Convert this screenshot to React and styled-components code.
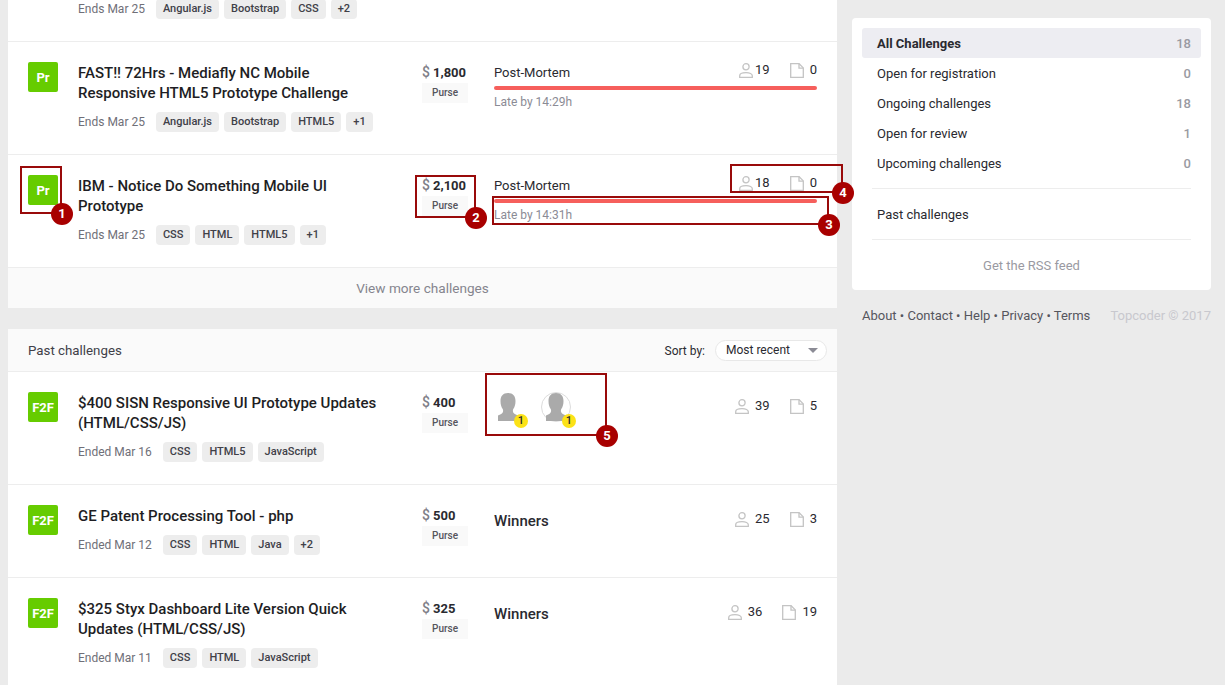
import React from 'react'
import styled, { createGlobalStyle } from 'styled-components'

const Global = createGlobalStyle`
  html, body {
    margin: 0;
    padding: 0;
    height: 685px;
    overflow: hidden;
    background: #ebebeb;
  }
  body {
    font-family: Roboto, "Liberation Sans", sans-serif;
    color: #2a2a30;
  }
`
const Page = styled.div`
  position: relative;
  display: flex;
  align-items: flex-start;
  gap: 15px;
  padding-left: 8px;
  height: 685px;
  overflow: hidden;
`
const Main = styled.div`
  width: 829px;
  flex: none;
`
const Section = styled.section`
  background: #fff;
  margin-bottom: 21px;
`
const CutRow = styled.div`
  display: flow-root;
  height: 42px;
  box-sizing: border-box;
  padding-left: 70px;
  border-bottom: 1px solid #ededed;
`
const Row = styled.div`
  display: flex;
  box-sizing: border-box;
  height: ${({ $height }) => $height || 113}px;
  padding: 20px 20px 0;
  border-bottom: 1px solid #ededed;
`
const Track = styled.div`
  width: 30px;
  height: 30px;
  flex: none;
  margin-right: 20px;
  border-radius: 2px;
  background: #66cc00;
  color: #fff;
  font-size: 13px;
  font-weight: 700;
  display: flex;
  align-items: center;
  justify-content: center;
`
const Info = styled.div`
  width: 344px;
  flex: none;
`
const Title = styled.h2`
  margin: 1px 0 9px;
  width: 305px;
  font-size: 15px;
  line-height: 20px;
  font-weight: 500;
  color: #1e1e24;
`
const Meta = styled.div`
  display: flex;
  align-items: center;
  gap: 5px;
  margin-top: ${({ $cut }) => ($cut ? -1 : 0)}px;
`
const When = styled.span`
  font-size: 12px;
  color: #6f6f78;
  margin-right: 6px;
`
const Tag = styled.span`
  height: 20px;
  line-height: 20px;
  padding: 0 7px;
  border-radius: 4px;
  background: #ededed;
  font-size: 11px;
  font-weight: 500;
  color: #404048;
`
const Prize = styled.div`
  width: 72px;
  flex: none;
`
const Amount = styled.div`
  font-size: 13px;
  line-height: 20px;
  font-weight: 700;
  color: #2a2a30;
  span {
    color: #7f7f88;
    font-weight: 500;
    font-size: 14px;
    margin-right: 3px;
  }
`
const Purse = styled.div`
  width: 46px;
  height: 20px;
  line-height: 20px;
  text-align: center;
  background: #f9f9f9;
  font-size: 10px;
  font-weight: 500;
  color: #55555d;
`
const Status = styled.div`
  flex: 1;
  padding-top: 1px;
`
const StatusHead = styled.div`
  display: flex;
  align-items: flex-start;
  justify-content: space-between;
  height: 23px;
`
const Phase = styled.span`
  font-size: 13px;
  line-height: 20px;
  color: #2a2a30;
  font-weight: ${({ $strong }) => ($strong ? 500 : 400)};
  ${({ $strong }) => $strong && 'font-size: 15px; margin-top: 5px;'}
`
const Bar = styled.div`
  height: 4px;
  border-radius: 2px;
  background: #f65f5c;
`
const Late = styled.div`
  margin-top: 4px;
  font-size: 12px;
  line-height: 16px;
  color: #8b8b95;
`
const Counts = styled.div`
  display: flex;
  align-items: center;
  gap: 20px;
  margin-top: ${({ $low }) => ($low ? 4 : -2)}px;
  font-size: 13px;
  line-height: 18px;
  color: #2a2a30;
`
const Count = styled.span`
  display: flex;
  align-items: center;
  gap: ${({ $gap }) => $gap}px;
`
const Winners = styled.div`
  display: flex;
  gap: 18px;
  margin: -1px 0 0 -1px;
`
const Avatar = styled.div`
  position: relative;
  width: 30px;
  height: 30px;
  box-sizing: border-box;
  border-radius: 50%;
  display: flex;
  justify-content: center;
  border: 1px solid ${({ $ring }) => ($ring ? '#dcdcdc' : 'transparent')};
`
const Place = styled.span`
  position: absolute;
  left: 20px;
  top: 21px;
  width: 14px;
  height: 14px;
  border-radius: 50%;
  background: #fce217;
  font-size: 11px;
  font-weight: 500;
  line-height: 14px;
  text-align: center;
  color: #2a2a30;
`
const More = styled.div`
  height: 40px;
  line-height: 41px;
  text-align: center;
  background: #fafafa;
  font-size: 13.6px;
  color: #85858e;
`
const PastHead = styled.div`
  display: flex;
  align-items: center;
  justify-content: space-between;
  box-sizing: border-box;
  height: 43px;
  padding: 1px 10px 0 20px;
  background: #fafafa;
  border-bottom: 1px solid #ededed;
  font-size: 13.3px;
  color: #404048;
`
const Sort = styled.div`
  display: flex;
  align-items: center;
  gap: 10px;
  font-size: 12px;
  color: #2a2a30;
`
const Select = styled.div`
  position: relative;
  width: 112px;
  height: 21px;
  box-sizing: border-box;
  padding-left: 10px;
  line-height: 19px;
  background: #fff;
  border: 1px solid #e8e8e8;
  border-radius: 11px;
  &::after {
    content: '';
    position: absolute;
    right: 8px;
    top: 7px;
    border-left: 5px solid transparent;
    border-right: 5px solid transparent;
    border-top: 5px solid #8b8b95;
  }
`
const Side = styled.aside`
  width: 359px;
  flex: none;
  margin-top: 18px;
`
const Panel = styled.nav`
  box-sizing: border-box;
  background: #fff;
  border-radius: 4px;
  padding: 10px;
`
const Item = styled.div`
  display: flex;
  justify-content: space-between;
  height: 30px;
  line-height: 31px;
  padding: 0 10px 0 15px;
  border-radius: 3px;
  font-size: 13px;
  color: #2a2a30;
  ${({ $active }) => $active && 'background: #ededf2; font-weight: 700;'}
`
const Num = styled.span`
  color: #9a9aa2;
  font-weight: 500;
`
const Divider = styled.div`
  height: 1px;
  margin: 10px 10px;
  background: #ededed;
`
const Rss = styled.div`
  height: 30px;
  line-height: 31px;
  text-align: center;
  font-size: 13px;
  color: #9a9aa2;
`
const Foot = styled.footer`
  display: flex;
  justify-content: space-between;
  padding: 17px 0 0 10px;
  font-size: 13px;
  line-height: 18px;
  color: #55555d;
`
const Copy = styled.span`
  color: #c8c8ce;
`
const Mark = styled.div`
  position: absolute;
  left: ${({ $x }) => $x}px;
  top: ${({ $y }) => $y}px;
  width: ${({ $w }) => $w}px;
  height: ${({ $h }) => $h}px;
  box-sizing: border-box;
  border: 2px solid #990a0a;
`
const MarkNum = styled.span`
  position: absolute;
  right: -13px;
  bottom: -13px;
  width: 22px;
  height: 22px;
  border-radius: 50%;
  background: #a80000;
  color: #fff;
  font-size: 13px;
  font-weight: 700;
  line-height: 22px;
  text-align: center;
`

const PersonIcon = () => (
  <svg width="14" height="15" viewBox="0 0 14 15" fill="none" stroke="#c4c4c4" strokeWidth="1.3">
    <circle cx="7" cy="3.8" r="3.1" />
    <path d="M.7 14.300v-1.600c0-1.900 2.600-3 6.300-3s6.300 1.100 6.300 3v1.600z" />
  </svg>
)
const DocIcon = () => (
  <svg width="14" height="15" viewBox="0 0 14 15" fill="none" stroke="#c4c4c4" strokeWidth="1.3">
    <path d="M.7.7h8.400l4.200 4.200v9.400H.7z" />
    <path d="M9 .7v4.400h4.300" />
  </svg>
)
const Head = () => (
  <svg width="20" height="28" viewBox="0 0 20 28">
    <path
      fill="#aaa"
      d="M10 0c5 0 7.500 3 7.500 8 0 3.500-.8 6-2.200 8-.7 1.100-.5 3.300.6 4.300 1 .9 2.700 1.500 4.100 2.200V28H0v-5.500c1.400-.7 3.100-1.300 4.100-2.200 1.100-1 1.300-3.200.6-4.300C3.300 14 2.500 11.500 2.500 8c0-5 2.500-8 7.500-8z"
    />
  </svg>
)

const Tags = ({ when, tags, cut }) => (
  <Meta $cut={cut}>
    <When>{when}</When>
    {tags.map((t) => (
      <Tag key={t}>{t}</Tag>
    ))}
  </Meta>
)
const Stats = ({ reg, sub, gap = 6, low }) => (
  <Counts $low={low}>
    <Count $gap={gap}>
      <PersonIcon />
      {reg}
    </Count>
    <Count $gap={6}>
      <DocIcon />
      {sub}
    </Count>
  </Counts>
)
const Money = ({ value }) => (
  <Prize>
    <Amount>
      <span>$</span>
      {value}
    </Amount>
    <Purse>Purse</Purse>
  </Prize>
)

const ongoing = [
  {
    title: 'FAST!! 72Hrs - Mediafly NC Mobile Responsive HTML5 Prototype Challenge',
    tags: ['Angular.js', 'Bootstrap', 'HTML5', '+1'],
    prize: '1,800',
    late: '14:29h',
    reg: 19,
  },
  {
    title: 'IBM - Notice Do Something Mobile UI Prototype',
    tags: ['CSS', 'HTML', 'HTML5', '+1'],
    prize: '2,100',
    late: '14:31h',
    reg: 18,
  },
]
const past = [
  {
    title: '$400 SISN Responsive UI Prototype Updates (HTML/CSS/JS)',
    when: 'Ended Mar 16',
    tags: ['CSS', 'HTML5', 'JavaScript'],
    prize: '400',
    reg: 39,
    sub: 5,
    avatars: true,
    height: 113,
  },
  {
    title: 'GE Patent Processing Tool - php',
    when: 'Ended Mar 12',
    tags: ['CSS', 'HTML', 'Java', '+2'],
    prize: '500',
    reg: 25,
    sub: 3,
    height: 93,
  },
  {
    title: '$325 Styx Dashboard Lite Version Quick Updates (HTML/CSS/JS)',
    when: 'Ended Mar 11',
    tags: ['CSS', 'HTML', 'JavaScript'],
    prize: '325',
    reg: 36,
    sub: 19,
    height: 113,
  },
]
const filters = [
  ['All Challenges', 18],
  ['Open for registration', 0],
  ['Ongoing challenges', 18],
  ['Open for review', 1],
  ['Upcoming challenges', 0],
]
const marks = [
  [20, 166, 42, 48, 1],
  [415, 175, 61, 43, 2],
  [492, 196, 337, 29, 3],
  [730, 164, 113, 29, 4],
  [485, 373, 122, 63, 5],
]

export default function App() {
  return (
    <Page>
      <Global />
      <Main>
        <Section>
          <CutRow>
            <Tags when="Ends Mar 25" tags={['Angular.js', 'Bootstrap', 'CSS', '+2']} cut />
          </CutRow>
          {ongoing.map((c) => (
            <Row key={c.title}>
              <Track>Pr</Track>
              <Info>
                <Title>{c.title}</Title>
                <Tags when="Ends Mar 25" tags={c.tags} />
              </Info>
              <Money value={c.prize} />
              <Status>
                <StatusHead>
                  <Phase>Post-Mortem</Phase>
                  <Stats reg={c.reg} sub={0} gap={2} />
                </StatusHead>
                <Bar />
                <Late>Late by {c.late}</Late>
              </Status>
            </Row>
          ))}
          <More>View more challenges</More>
        </Section>
        <Section>
          <PastHead>
            Past challenges
            <Sort>
              Sort by:
              <Select>Most recent</Select>
            </Sort>
          </PastHead>
          {past.map((c) => (
            <Row key={c.title} $height={c.height}>
              <Track>F2F</Track>
              <Info>
                <Title>{c.title}</Title>
                <Tags when={c.when} tags={c.tags} />
              </Info>
              <Money value={c.prize} />
              <Status>
                <StatusHead>
                  {c.avatars ? (
                    <Winners>
                      <Avatar>
                        <Head />
                        <Place>1</Place>
                      </Avatar>
                      <Avatar $ring>
                        <Head />
                        <Place>1</Place>
                      </Avatar>
                    </Winners>
                  ) : (
                    <Phase $strong>Winners</Phase>
                  )}
                  <Stats reg={c.reg} sub={c.sub} low />
                </StatusHead>
              </Status>
            </Row>
          ))}
        </Section>
      </Main>
      <Side>
        <Panel>
          {filters.map(([name, n], i) => (
            <Item key={name} $active={i === 0}>
              {name}
              <Num>{n}</Num>
            </Item>
          ))}
          <Divider />
          <Item>Past challenges</Item>
          <Divider />
          <Rss>Get the RSS feed</Rss>
        </Panel>
        <Foot>
          <span>About • Contact • Help • Privacy • Terms</span>
          <Copy>Topcoder © 2017</Copy>
        </Foot>
      </Side>
      {marks.map(([x, y, w, h, n]) => (
        <Mark key={n} $x={x} $y={y} $w={w} $h={h}>
          <MarkNum>{n}</MarkNum>
        </Mark>
      ))}
    </Page>
  )
}
